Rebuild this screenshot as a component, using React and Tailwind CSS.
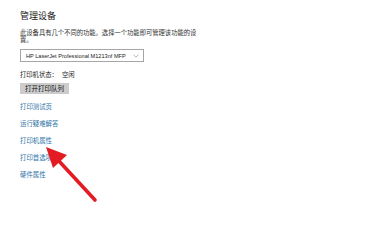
const links = ["打印测试页", "运行疑难解答", "打印机属性", "打印首选项", "硬件属性"];

const App = () => {
  return (
    <div className="relative w-[378px] h-[249px] overflow-hidden bg-white font-['Liberation_Sans','Noto_Sans_CJK_SC',sans-serif]">
      <div className="pl-[20px] pt-[10px] flex flex-col items-start">
        {/* HEADER */}
        <h1 className="text-[9px] leading-[12px] text-[#1a1a1a]">管理设备</h1>
        <p className="mt-[7px] w-[180px] text-[6.3px] leading-[7px] text-[#333]">
          此设备具有几个不同的功能。选择一个功能即可管理该功能的设置。
        </p>

        {/* PRINTER SELECT */}
        <div className="mt-[6px] w-[124px] h-[13px] border border-[#a6a6a6] flex items-center justify-between pl-[5px] pr-[4px]">
          <span className="text-[5.6px] leading-[8px] text-[#222]">HP LaserJet Professional M1213nf MFP</span>
          <svg width="6" height="4" viewBox="0 0 6 4" fill="none">
            <path d="M0.5 0.8 L3 3.2 L5.5 0.8" stroke="#a0a0a0" strokeWidth="0.8" />
          </svg>
        </div>

        {/* STATUS */}
        <div className="mt-[9px] flex text-[6.3px] leading-[8px] text-[#222]">
          <span className="w-[42px]">打印机状态：</span>
          <span>空闲</span>
        </div>
        <button className="mt-[4px] w-[49px] h-[11px] bg-[#cccccc] text-[6.5px] leading-[8px] text-[#111]">
          打开打印队列
        </button>

        {/* LINKS */}
        <div className="mt-[9px] flex flex-col gap-[9px]">
          {links.map((l) => (
            <a key={l} className="text-[6.4px] leading-[8px] text-[#2c72a6]">
              {l}
            </a>
          ))}
        </div>
      </div>

      {/* annotation arrow */}
      <svg className="absolute left-0 top-0" width="378" height="249" viewBox="0 0 378 249">
        <line x1="95" y1="200" x2="58" y2="160" stroke="#e31b23" strokeWidth="3.6" strokeLinecap="round" />
        <polygon points="46,147 67,155 53,168" fill="#e31b23" />
      </svg>
    </div>
  );
};

export default App;
